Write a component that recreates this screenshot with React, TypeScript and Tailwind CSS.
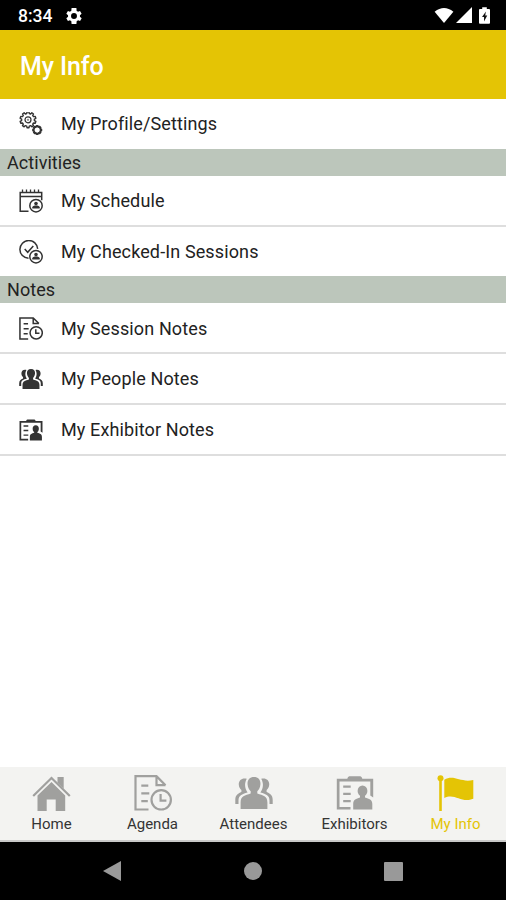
import React from "react";

type IconProps = { className?: string };

function Gear({ cx, cy, r, teeth, width }: { cx: number; cy: number; r: number; teeth: number; width: number }) {
  const points: string[] = [];
  for (let i = 0; i < teeth; i++) {
    const step = (Math.PI * 2) / teeth;
    [[-0.32, 0.8], [-0.2, 1], [0.2, 1], [0.32, 0.8]].forEach(([a, k]) => {
      const angle = (i + a) * step - Math.PI / 2;
      points.push(`${(cx + Math.cos(angle) * r * k).toFixed(2)},${(cy + Math.sin(angle) * r * k).toFixed(2)}`);
    });
  }
  return <polygon points={points.join(" ")} fill="none" stroke="currentColor" strokeWidth={width} strokeLinejoin="round" />;
}

function GearsIcon({ className }: IconProps) {
  return (
    <svg viewBox="0 0 24 24" className={className} fill="none" stroke="currentColor">
      <Gear cx={9} cy={7.8} r={8} teeth={10} width={1.4} />
      <circle cx="9" cy="7.8" r="3" strokeWidth="1.2" />
      <circle cx="9" cy="7.8" r="0.7" strokeWidth="0.6" />
      <Gear cx={18.2} cy={18} r={4.2} teeth={8} width={1.8} />
    </svg>
  );
}

function Badge() {
  return (
    <>
      <circle cx="17" cy="16.7" r="6.2" strokeWidth="1.5" />
      <circle cx="17" cy="14.6" r="1.8" fill="currentColor" stroke="none" />
      <path d="M13.3 19.6v-1.3q0-1.5 2.3-1.9h2.8q2.3.4 2.3 1.9v1.3Z" fill="currentColor" stroke="none" />
    </>
  );
}

function ScheduleIcon({ className }: IconProps) {
  return (
    <svg viewBox="0 0 24 24" className={className} fill="none" stroke="currentColor">
      <path d="M9.5 22.3H1.2V3.5h21.5v7.8M1.2 7.5h21.5" strokeWidth="1.5" />
      <path d="M3.5 3.500v-3M7.500 3.500v-3M11.500 3.500v-3M15.500 3.500v-3M19.500 3.500v-3" strokeWidth="1.300" />
      <Badge />
    </svg>
  );
}

function CheckedIcon({ className }: IconProps) {
  return (
    <svg viewBox="0 0 24 24" className={className} fill="none" stroke="currentColor">
      <path d="M9.5 18.3A8.9 8.9 0 1 1 18.7 8.9" strokeWidth="1.5" />
      <path d="m5.7 9.1 3 3.2 5.6-6.2" strokeWidth="1.5" />
      <Badge />
    </svg>
  );
}

function AgendaIcon({ className, stroke }: IconProps & { stroke: number }) {
  return (
    <svg viewBox="0 0 38 36" className={className} fill="none" stroke="currentColor" strokeWidth={stroke}>
      <path d="M14.5 34.5H1.5V1.2h21l9 9M22.5 1.2v9h9" />
      <path d="M7.3 10.6h7M7.3 18.3h8M7.3 26.2h6.5" />
      <circle cx="27.2" cy="24.8" r="9.7" />
      <path d="M26.6 19v6.7h5.8" />
    </svg>
  );
}

function PeopleIcon({ className }: IconProps) {
  return (
    <svg viewBox="0 0 38 34" className={className} fill="currentColor">
      <path d="M19 1c-4.500 0-6.800 3.200-6.400 7.400.3 3 1.500 5.400 3.100 6.900v2.300C10 19.400 5.600 20 5.600 26.500V33h26.800v-6.500c0-6.500-4.400-7.100-10.100-8.900v-2.300c1.600-1.500 2.800-3.900 3.100-6.900C25.800 4.200 23.500 1 19 1Z" />
      <path d="M11.800 2.700C7 1.400 3.400 4.200 3.800 8.800c.2 2.500 1.100 4 2.600 5.200v2.100C2.900 17.600.3 19.200.3 24v4h3.200v-3.500c0-5.200 3.300-6.500 9.100-8.100-2.600-3.300-3.700-8.500-.8-13.700ZM26.200 2.700c4.800-1.300 8.400 1.500 8 6.100-.2 2.500-1.100 4-2.600 5.200v2.100c3.500 1.500 6.100 3.100 6.100 7.900v4h-3.200v-3.500c0-5.200-3.300-6.500-9.100-8.100 2.600-3.300 3.700-8.500.8-13.700Z" />
    </svg>
  );
}

function ExhibitorIcon({ className }: IconProps) {
  return (
    <svg viewBox="0 0 38 34" className={className} fill="currentColor">
      <path d="M14.500 31v2.500H.8V2.800h10.500c.5-2 1.500-2.500 3-2.500h9c1.500 0 2.500.5 3 2.500h10.900v18.700l-2.900-2V5.500H26.300H11.300H3.500V31Z" />
      <path d="M7.200 9.600h7.500v2.200H7.200zM7.200 16.700h7.500v2.200H7.200zM7.200 24h7.500v2.200H7.200z" />
      <ellipse cx="26.500" cy="15" rx="4.900" ry="5.600" />
      <path d="M24 18h5v3.500c4 1.200 7.300 2 7.300 6.500v5.500H17.200V28c0-4.500 3-5.300 6.800-6.500Z" />
    </svg>
  );
}

function HomeIcon({ className }: IconProps) {
  return (
    <svg viewBox="0 0 39 35" className={className} fill="currentColor">
      <path d="M5.500 19.500 19.500 6l13.700 13.500V35h-9.500V23.500h-9V35H5.500Z" />
      <path d="m1.200 20 18.300-18 18.300 18" fill="none" stroke="currentColor" strokeWidth="2.200" />
      <path d="M25.500 1h6.200v11.800l-6.200-6Z" />
    </svg>
  );
}

function FlagIcon({ className }: IconProps) {
  return (
    <svg viewBox="0 0 37 36" className={className} fill="currentColor">
      <circle cx="3.500" cy="3.200" r="3" />
      <path d="M2.200 4h2.600v32H2.200zM7.300 4.700c10-5.500 16 3.300 29 .3v18.700c-12 5-18-6-29-.8Z" />
    </svg>
  );
}

function Row({ icon, label, last }: { icon: React.ReactNode; label: string; last?: boolean }) {
  return (
    <div className={`flex items-center pl-[19px] ${last ? "h-[49.5px]" : "h-[50.8px] border-b-2 border-[#dedede] pt-[2px]"}`}>
      <div className="flex h-6 w-6 items-center justify-center text-[#333]">{icon}</div>
      <span className="ml-[18px] whitespace-nowrap text-[18px] leading-6 tracking-[0.12px] text-[#222]">{label}</span>
    </div>
  );
}

function Section({ title }: { title: string }) {
  return (
    <h2 className="flex h-[27px] items-center bg-[#bcc6bb] pl-[7px] pt-px text-[18px] leading-6 tracking-[0.05px] text-[#222]">{title}</h2>
  );
}

function Tab({ icon, label, active }: { icon: React.ReactNode; label: string; active?: boolean }) {
  return (
    <div className={`flex flex-1 flex-col items-center pt-2 ${active ? "text-[#e4c405]" : "text-[#a0a09e]"}`}>
      <div className="flex h-9 items-center">{icon}</div>
      <span className={`mt-[3px] whitespace-nowrap text-[15px] leading-5 ${active ? "" : "text-[#343434]"}`}>{label}</span>
    </div>
  );
}

export default function App() {
  return (
    <div className="flex h-[900px] w-[506px] flex-col overflow-hidden bg-white font-['Roboto',sans-serif]">
      <div className="flex h-[30px] shrink-0 items-center bg-black pl-[18px] pr-[16px] text-white">
        <span className="mt-[2px] w-[35px] text-[17.5px] font-medium leading-6">8:34</span>
        <svg viewBox="2 2 20 20" className="ml-[13px] mt-px h-4 w-4" fill="currentColor">
          <path d="M19.400 13a7.800 7.800 0 0 0 0-2l2.100-1.700-2-3.500-2.500 1a7.500 7.500 0 0 0-1.700-1L15 2H9l-.4 3.800a7.500 7.500 0 0 0-1.700 1l-2.500-1-2 3.500L4.600 11a7.800 7.800 0 0 0 0 2l-2.200 1.700 2 3.500 2.500-1a7.500 7.500 0 0 0 1.700 1L9 22h6l.4-3.800a7.500 7.500 0 0 0 1.700-1l2.500 1 2-3.500ZM12 15.700a3.700 3.700 0 1 1 0-7.400 3.700 3.700 0 0 1 0 7.400Z" />
        </svg>
        <svg viewBox="0 0 20 16" className="ml-auto h-[15px] w-5" fill="currentColor">
          <path d="M0 4Q10-4 20 4L10 16Z" />
        </svg>
        <svg viewBox="0 0 16 16" className="ml-[2px] h-4 w-4" fill="currentColor"><path d="M16 0v16H0Z" /></svg>
        <svg viewBox="0 0 12 18" className="ml-[7px] h-[17px] w-[11px]">
          <path d="M3.500 0h5v2H11q1 0 1 1v14q0 1-1 1H1q-1 0-1-1V3q0-1 1-1h2.500Z" fill="currentColor" />
          <path d="M7.500 4.500 3.300 10.500h2.200v5l3.500-6.500H6.800Z" fill="#111" />
        </svg>
      </div>
      <header className="flex h-[69px] shrink-0 items-center bg-[#e4c405] pl-[20px] pt-[4px]">
        <h1 className="text-[25px] font-medium leading-8 tracking-[-0.1px] text-white">My Info</h1>
      </header>
      <main className="flex-1 pt-[0.5px]">
        <Row icon={<GearsIcon className="h-6 w-6" />} label="My Profile/Settings" last />
        <Section title="Activities" />
        <Row icon={<ScheduleIcon className="h-6 w-6" />} label="My Schedule" />
        <Row icon={<CheckedIcon className="h-6 w-6" />} label="My Checked-In Sessions" last />
        <Section title="Notes" />
        <Row icon={<AgendaIcon className="h-[23px] w-6" stroke={2.4} />} label="My Session Notes" />
        <Row icon={<PeopleIcon className="h-[22px] w-6" />} label="My People Notes" />
        <Row icon={<ExhibitorIcon className="h-[22px] w-6" />} label="My Exhibitor Notes" />
      </main>
      <nav className="flex h-[75px] shrink-0 border-b-2 border-[#c9c9c8] bg-[#f3f3f1] pl-px">
        <Tab icon={<HomeIcon className="h-[35px] w-[39px]" />} label="Home" />
        <Tab icon={<AgendaIcon className="h-9 w-[38px]" stroke={2.2} />} label="Agenda" />
        <Tab icon={<PeopleIcon className="h-[34px] w-[38px]" />} label="Attendees" />
        <Tab icon={<ExhibitorIcon className="h-[34px] w-[38px]" />} label="Exhibitors" />
        <Tab icon={<FlagIcon className="h-9 w-[37px]" />} label="My Info" active />
      </nav>
      <div className="flex h-[58px] shrink-0 items-center bg-black pl-[103px] text-[#999]">
        <svg viewBox="0 0 18 20" className="h-5 w-[18px]" fill="currentColor"><path d="M18 0v20L0 10Z" /></svg>
        <div className="ml-[123px] h-[18px] w-[18px] rounded-full bg-[#999]" />
        <div className="ml-[122px] h-[19px] w-[19px] rounded-[1px] bg-[#999]" />
      </div>
    </div>
  );
}
